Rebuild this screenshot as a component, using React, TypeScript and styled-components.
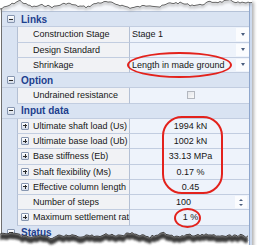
import React from 'react';
import styled, { createGlobalStyle } from 'styled-components';

const ROW_H = 15.25;
const LINE = '#c2cde0';
const MARGIN_BG = '#d9e3f2';

type Editor = 'dropdown' | 'spin' | 'check';

type RowData =
  | { type: 'category'; label: string }
  | { type: 'prop'; label: string; value?: string; expandable?: boolean; editor?: Editor };

const rows: RowData[] = [
  { type: 'category', label: 'Links' },
  { type: 'prop', label: 'Construction Stage', value: 'Stage 1', editor: 'dropdown' },
  { type: 'prop', label: 'Design Standard', value: '', editor: 'dropdown' },
  { type: 'prop', label: 'Shrinkage', value: 'Length in made ground', editor: 'dropdown' },
  { type: 'category', label: 'Option' },
  { type: 'prop', label: 'Undrained resistance', editor: 'check' },
  { type: 'category', label: 'Input data' },
  { type: 'prop', label: 'Ultimate shaft load (Us)', value: '1994 kN', expandable: true },
  { type: 'prop', label: 'Ultimate base load (Ub)', value: '1002 kN', expandable: true },
  { type: 'prop', label: 'Base stiffness (Eb)', value: '33.13 MPa', expandable: true },
  { type: 'prop', label: 'Shaft flexibility (Ms)', value: '0.17 %', expandable: true },
  { type: 'prop', label: 'Effective column length', value: '0.45', expandable: true },
  { type: 'prop', label: 'Number of steps', value: '100', editor: 'spin' },
  { type: 'prop', label: 'Maximum settlement rate', value: '1 %', expandable: true },
  { type: 'category', label: 'Status' },
];

// torn paper edges: a base curve plus a little seeded noise
function jagged(base: number[][], step: number, amp: number, seed: number): number[][] {
  let s = seed;
  const rand = () => {
    s = (s * 9301 + 49297) % 233280;
    return s / 233280;
  };
  const pts: number[][] = [];
  const last = base[base.length - 1][0];
  for (let x = base[0][0]; x <= last; x += step) {
    let i = 0;
    while (i < base.length - 2 && base[i + 1][0] < x) i++;
    const [x0, y0] = base[i];
    const [x1, y1] = base[i + 1];
    const t = (x - x0) / (x1 - x0);
    pts.push([x, y0 + (y1 - y0) * t + (rand() - 0.5) * 2 * amp]);
  }
  return pts;
}

const toPath = (pts: number[][]) => pts.map(([x, y]) => `${x.toFixed(1)},${y.toFixed(1)}`).join(' L');

const topEdge = jagged(
  [[0, 9], [6, 7], [14, 3], [20, 0.5], [25, 4], [33, 7], [43, 5], [53, 7], [67, 3], [77, 6], [87, 7], [97, 3], [107, 2], [120, 5], [131, 8], [150, 5], [160, 7], [170, 3], [180, 3], [190, 5], [200, 5], [210, 2], [220, 2], [230, 0.5], [240, 3], [252, 3]],
  2, 1, 7,
);

const bottomEdge = jagged(
  [[0, 233], [10, 233], [20, 235], [30, 236], [40, 236], [50, 238], [60, 236], [70, 235], [80, 237], [90, 235], [100, 236], [110, 234], [120, 236], [130, 233], [140, 235], [150, 237], [163, 233], [172, 236], [180, 237], [190, 235], [197, 235], [210, 234], [223, 237], [237, 235], [248, 237]],
  2, 1.3, 19,
);

const GlobalStyle = createGlobalStyle`
  html, body {
    margin: 0;
    padding: 0;
    background: #fff;
  }
  body {
    font-family: "Liberation Sans", Arial, sans-serif;
  }
`;

const Stage = styled.div`
  position: relative;
  width: 260px;
  height: 250px;
  overflow: hidden;
  background: #fff;
`;

const Panel = styled.div`
  margin-left: 1px;
  width: 249px;
  height: 250px;
  box-sizing: border-box;
  border-left: 1px solid #6f6f6f;
  border-right: 1px solid #8ea6cc;
  background: #f1f3f7;
  box-shadow: 2px 0 0 #cddaee, 4px 2px 3px rgba(0, 0, 0, 0.3);
  font-family: "Liberation Sans", Arial, sans-serif;
  font-size: 9px;
  color: #161616;
`;

const TopStrip = styled.div`
  height: 12px;
  box-sizing: border-box;
  border-bottom: 1px solid #b5c2d7;
  background: #f5f7fb;
`;

const CategoryRow = styled.div`
  display: flex;
  align-items: center;
  gap: 6px;
  height: ${ROW_H}px;
  box-sizing: border-box;
  padding-left: 5px;
  border-bottom: 1px solid ${LINE};
  background: ${MARGIN_BG};
`;

const CategoryTitle = styled.span`
  font-size: 10px;
  font-weight: bold;
  color: #1d3f8e;
  white-space: nowrap;
`;

const ExpandBox = styled.span<{ $plus?: boolean }>`
  display: grid;
  place-items: center;
  width: 8px;
  height: 8px;
  box-sizing: border-box;
  border: 1px solid #8796b0;
  border-radius: 1px;
  background: linear-gradient(#ffffff, #d3dbe8);
  flex: none;

  &::before {
    content: '';
    grid-area: 1 / 1;
    width: 4px;
    height: 1px;
    background: #2a2a2a;
  }

  &::after {
    content: '';
    grid-area: 1 / 1;
    width: 1px;
    height: 4px;
    background: ${(p) => (p.$plus ? '#2a2a2a' : 'transparent')};
  }
`;

const PropRow = styled.div`
  display: grid;
  grid-template-columns: 15px 112px 1fr;
  height: ${ROW_H}px;
`;

const MarginCell = styled.div`
  background: ${MARGIN_BG};
`;

const NameCell = styled.div`
  display: flex;
  align-items: center;
  gap: 4px;
  padding-left: 3px;
  box-sizing: border-box;
  border-left: 1px solid #b4c0d4;
  border-bottom: 1px solid ${LINE};
  background: #f1f2f5;
  overflow: hidden;
  white-space: nowrap;
`;

const Slot = styled.span`
  width: 8px;
  flex: none;
  display: flex;
`;

const ValueCell = styled.div`
  display: flex;
  align-items: stretch;
  min-width: 0;
  box-sizing: border-box;
  padding: 1px 0 1px 2px;
  border-left: 1px solid #b4c0d4;
  border-bottom: 1px solid ${LINE};
  background: #eef3fb;
`;

const ValueText = styled.span<{ $align: 'left' | 'center' }>`
  flex: 1;
  display: flex;
  align-items: center;
  justify-content: ${(p) => (p.$align === 'left' ? 'flex-start' : 'center')};
  white-space: nowrap;
  overflow: hidden;
`;

const DropButton = styled.span`
  width: 13px;
  flex: none;
  display: flex;
  align-items: center;
  justify-content: center;
  background: #fbfcfe;

  &::after {
    content: '';
    border-left: 2.5px solid transparent;
    border-right: 2.5px solid transparent;
    border-top: 3px solid #4a5d7e;
  }
`;

const SpinButton = styled.span`
  width: 12px;
  margin-right: 2px;
  flex: none;
  display: flex;
  flex-direction: column;
  align-items: center;
  justify-content: center;
  gap: 3px;
  background: #fbfcfe;

  &::before {
    content: '';
    border-left: 2px solid transparent;
    border-right: 2px solid transparent;
    border-bottom: 2.5px solid #4a5d7e;
  }

  &::after {
    content: '';
    border-left: 2px solid transparent;
    border-right: 2px solid transparent;
    border-top: 2.5px solid #4a5d7e;
  }
`;

const CheckBox = styled.span`
  width: 8px;
  height: 8px;
  box-sizing: border-box;
  border: 1px solid #b3b7bf;
  background: linear-gradient(135deg, #e4e6ea, #fafafa);
`;

const Annotation = styled.div<{ $x: number; $y: number; $w: number; $h: number; $r: string }>`
  position: absolute;
  left: ${(p) => p.$x}px;
  top: ${(p) => p.$y}px;
  width: ${(p) => p.$w}px;
  height: ${(p) => p.$h}px;
  box-sizing: border-box;
  border: 2px solid #e3221c;
  border-radius: ${(p) => p.$r};
  pointer-events: none;
`;

const Edge = styled.svg`
  position: absolute;
  left: 0;
  top: 0;
  pointer-events: none;
`;

function Category({ label }: { label: string }) {
  return (
    <CategoryRow>
      <ExpandBox />
      <CategoryTitle>{label}</CategoryTitle>
    </CategoryRow>
  );
}

function Property({ label, value, expandable, editor }: Extract<RowData, { type: 'prop' }>) {
  return (
    <PropRow>
      <MarginCell />
      <NameCell>
        <Slot>{expandable && <ExpandBox $plus />}</Slot>
        <span>{label}</span>
      </NameCell>
      <ValueCell>
        {editor === 'check' ? (
          <ValueText $align="center">
            <CheckBox />
          </ValueText>
        ) : (
          <ValueText $align={editor === 'dropdown' ? 'left' : 'center'}>{value}</ValueText>
        )}
        {editor === 'dropdown' && <DropButton />}
        {editor === 'spin' && <SpinButton />}
      </ValueCell>
    </PropRow>
  );
}

function TornEdges() {
  const shadow = `M${toPath(bottomEdge)} L${toPath(
    bottomEdge.map(([x, y]) => [x, y + 6]).reverse(),
  )} Z`;
  const below = `M${toPath(bottomEdge)} L248,245 L260,245 L260,250 L0,250 Z`;
  const topShade = `M${toPath(topEdge)} L${toPath(topEdge.map(([x, y]) => [x, y + 3]).reverse())} Z`;
  return (
    <Edge width="260" height="250" viewBox="0 0 260 250">
      <defs>
        <filter id="soft" x="-5%" y="-50%" width="110%" height="200%">
          <feGaussianBlur stdDeviation="1.3" />
        </filter>
        <filter id="faint" x="-5%" y="-50%" width="110%" height="200%">
          <feGaussianBlur stdDeviation="0.8" />
        </filter>
        <clipPath id="under">
          <path d={below} />
        </clipPath>
      </defs>
      <path d={topShade} fill="#9a9a9a" opacity="0.45" filter="url(#faint)" />
      <path d={`M0,0 L${toPath(topEdge)} L252,0 Z`} fill="#fff" />
      <path d={`M${toPath(topEdge)}`} fill="none" stroke="#666" strokeWidth="1" />
      <path d={below} fill="#fff" />
      <g clipPath="url(#under)">
        <path d={shadow} fill="#262626" opacity="0.9" filter="url(#soft)" />
      </g>
      <path d={`M${toPath(bottomEdge)}`} fill="none" stroke="#333" strokeWidth="0.9" />
    </Edge>
  );
}

export default function App() {
  return (
    <>
      <GlobalStyle />
      <Stage>
        <Panel>
          <TopStrip />
          {rows.map((row) =>
            row.type === 'category' ? (
              <Category key={row.label} label={row.label} />
            ) : (
              <Property key={row.label} {...row} />
            ),
          )}
        </Panel>
        <TornEdges />
        <Annotation $x={127} $y={52} $w={105} $h={26} $r="50%" />
        <Annotation $x={162} $y={116} $w={61} $h={78} $r="20px" />
        <Annotation $x={174} $y={208} $w={27} $h={20} $r="50%" />
      </Stage>
    </>
  );
}
